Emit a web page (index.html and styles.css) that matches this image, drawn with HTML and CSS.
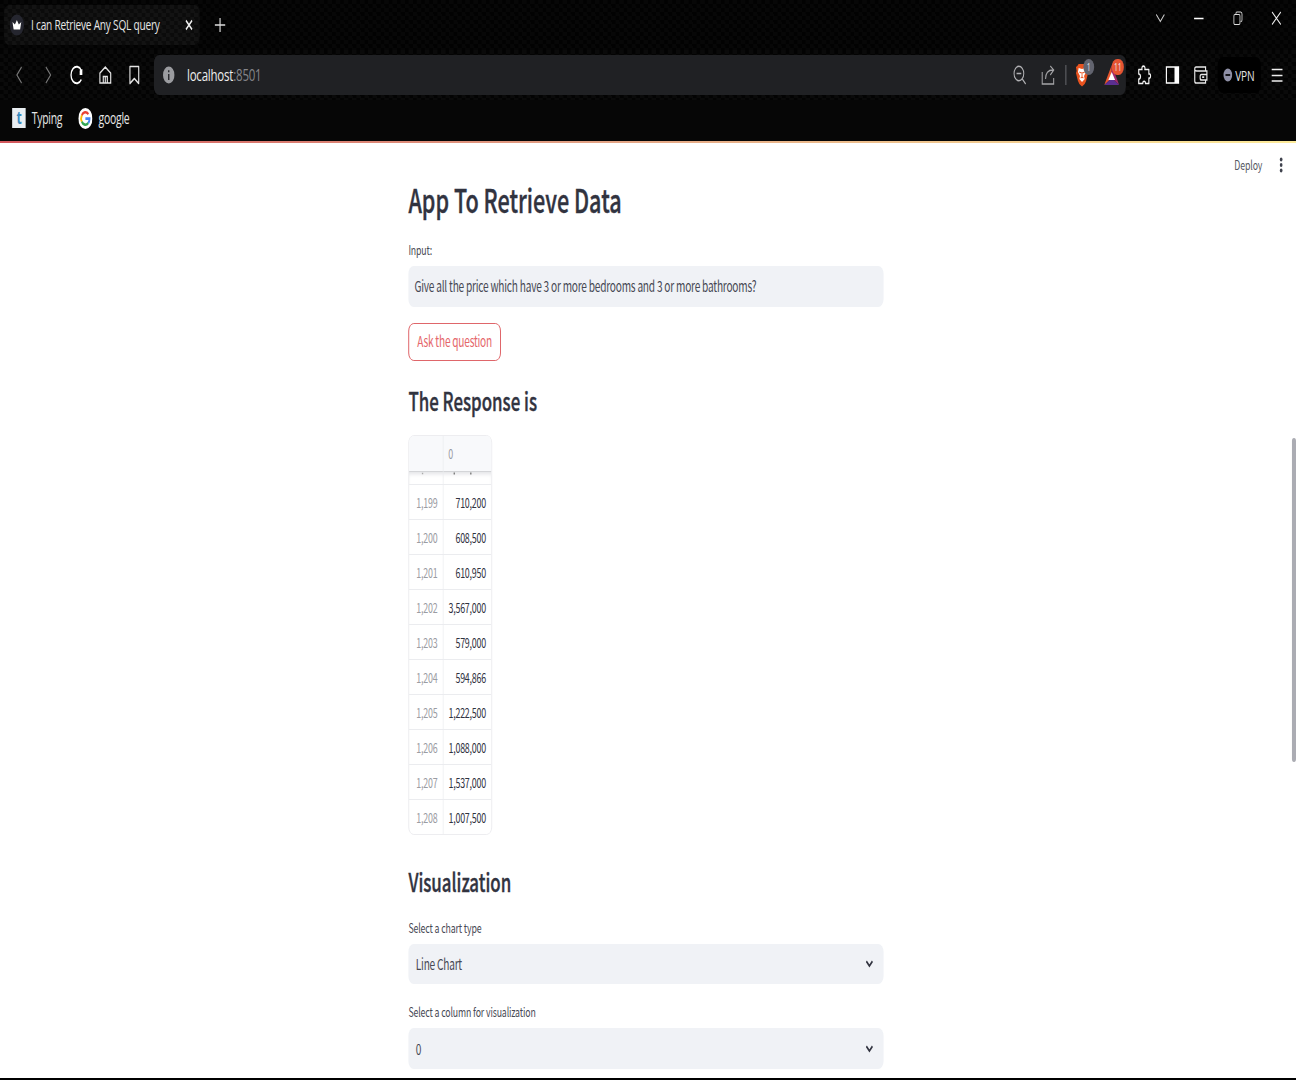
FILE: index.html
```
<!DOCTYPE html>
<html lang="en">
<head>
<meta charset="utf-8">
<title>I can Retrieve Any SQL query</title>
<link rel="stylesheet" href="styles.css">
</head>
<body>
<div class="viewport">
<div class="screen">
  <header class="browser">
    <div class="tabstrip">
      <div class="tab">
        <svg class="favicon" width="22" height="22" viewBox="0 0 22 22"><circle cx="11" cy="11" r="10.5" fill="#25262f"/><path d="M4.500 8l3.600 2.500L11 6l2.900 4.500L17.500 8l-1.700 7.500H6.200z" fill="#fff"/></svg>
        <span class="tab-title">I can Retrieve Any SQL query</span>
        <svg class="tab-close" width="12" height="12" viewBox="0 0 12 12"><path d="M1.500 1.500l9 9M10.500 1.500l-9 9" stroke="#f0f0f0" stroke-width="1.800"/></svg>
      </div>
      <svg class="new-tab" width="16" height="16" viewBox="0 0 16 16"><path d="M8 1v14M0 8h16" stroke="#ddd" stroke-width="1.700"/></svg>
      <div class="window-controls">
        <svg width="16" height="16" viewBox="0 0 16 16"><path d="M2 4.500l6 7 6-7" fill="none" stroke="#ccc" stroke-width="1.200"/></svg>
        <svg width="16" height="16" viewBox="0 0 16 16"><path d="M1 8.500h14" stroke="#fff" stroke-width="1.300"/></svg>
        <svg width="16" height="16" viewBox="0 0 16 16"><rect x="2" y="4.500" width="9" height="10" rx="1.500" fill="none" stroke="#ddd" stroke-width="1.200"/><path d="M5 4V3.500Q5 2 6.500 2H12q2 0 2 2v6q0 1.500-1.500 1.500H12" fill="none" stroke="#ddd" stroke-width="1.200"/></svg>
        <svg width="16" height="16" viewBox="0 0 16 16"><path d="M1.500 2l13 12.500M14.500 2l-13 12.500" stroke="#eee" stroke-width="1.300"/></svg>
      </div>
    </div>
    <div class="toolbar">
      <div class="nav">
        <svg width="22" height="22" viewBox="0 0 22 22"><path d="M15 3L8 11l7 8" fill="none" stroke="#777" stroke-width="1.500"/></svg>
        <svg width="22" height="22" viewBox="0 0 22 22"><path d="M8 3l7 8-7 8" fill="none" stroke="#777" stroke-width="1.500"/></svg>
        <svg width="22" height="22" viewBox="0 0 22 22"><path d="M18.500 15.500A8.300 8.300 0 1 1 18.500 6.500" fill="none" stroke="#fff" stroke-width="1.900"/><path d="M16 6.500l4-1.500v6h-4z" fill="#fff"/></svg>
        <svg width="22" height="22" viewBox="0 0 22 22"><path d="M3 9.200L11 3l8 6.200V19H3zM8 19v-6.500h6V19M11 13v6" fill="none" stroke="#e4e4e4" stroke-width="1.700"/></svg>
        <svg width="22" height="22" viewBox="0 0 22 22"><path d="M4.500 2.500h13v17L11 14.500l-6.500 5z" fill="none" stroke="#e4e4e4" stroke-width="1.700" stroke-linejoin="round"/></svg>
      </div>
      <div class="address">
        <svg class="info" width="18" height="18" viewBox="0 0 18 18"><circle cx="9" cy="9" r="8.500" fill="#9b9ca0"/><path d="M9 8v6M9 4.200v2" stroke="#222327" stroke-width="2"/></svg>
        <span class="url">localhost<span class="port">:8501</span></span>
        <div class="address-actions">
          <svg width="22" height="22" viewBox="0 0 22 22"><circle cx="9.500" cy="9.500" r="7.200" fill="none" stroke="#b0b0b3" stroke-width="1.500"/><path d="M14.500 15l5 5M6 9.500h7" stroke="#b0b0b3" stroke-width="1.700"/></svg>
          <svg width="22" height="22" viewBox="0 0 22 22"><path d="M2 8v12h17v-6M7 15c0-6 4-9 11-9M14 2l5 4-5 5" fill="none" stroke="#a5a5a8" stroke-width="1.500"/></svg>
          <i class="divider"></i>
          <span class="ext">
            <svg width="20" height="24" viewBox="0 0 20 24"><path d="M5 1h10l2 2 2 1-1 4 1 2-3 8q-1 3-6 5.500Q5 21 4 18L1 10l1-2-1-4 2-1z" fill="#e9531f"/><path d="M5 5l5 1 5-1 1 4-3 4 1 3-4 3-4-3 1-3-3-4z" fill="#fff"/><path d="M6 9l3 1M14 9l-3 1M10 9v5l-2 1M10 14l2 1" stroke="#e9531f" stroke-width="1.200" fill="none"/></svg>
            <b class="badge">1</b>
          </span>
          <span class="ext">
            <svg width="24" height="22" viewBox="0 0 24 22"><path d="M12 1L1 21l11-7z" fill="#e8562d"/><path d="M12 1l11 20-11-7z" fill="#a12a70"/><path d="M1 21h22l-11-7z" fill="#5b2f91"/><path d="M12 8l5 8H7z" fill="#fff"/></svg>
            <b class="badge badge-red">11</b>
          </span>
        </div>
      </div>
      <div class="extensions">
        <svg width="22" height="22" viewBox="0 0 22 22"><path d="M3 5.500h5C6 1 14 1 12 5.500h6V10c3.500-1 3.500 5 0 4v5.500h-5c0-3-4-3-4 0H3V15c3.500 0 3.500-5 0-5z" fill="none" stroke="#f2f2f2" stroke-width="1.700" stroke-linejoin="round"/></svg>
        <svg width="22" height="22" viewBox="0 0 22 22"><path d="M2 3h18v16H2z" fill="none" stroke="#fff" stroke-width="1.700"/><path d="M14 3h6v16h-6z" fill="#fff"/></svg>
        <svg width="22" height="22" viewBox="0 0 22 22"><path d="M18 7V3H4Q2 3 2 5v12q0 2 2 2h14v-3M2 6q1 1 3 1h15v9h-8q-2 0-2-2v-1.500q0-2 2-2h8M13 13.200h3" fill="none" stroke="#e8e8e8" stroke-width="1.700"/></svg>
      </div>
      <div class="vpn">
        <svg width="14" height="14" viewBox="0 0 14 14"><circle cx="7" cy="7" r="6.500" fill="#8f90a6"/><path d="M3.500 7h7" stroke="#17171c" stroke-width="2"/></svg>
        <span>VPN</span>
      </div>
      <svg class="menu" width="20" height="16" viewBox="0 0 20 16"><path d="M2 2.500h16M2 8.500h16M2 14h16" stroke="#eee" stroke-width="1.600"/></svg>
    </div>
    <div class="bookmarks">
      <span class="mark-t">t</span><span class="mark-name typing">Typing</span>
      <svg width="21" height="21" viewBox="0 0 21 21"><circle cx="10.500" cy="10.500" r="10.500" fill="#fff"/><g fill="none" stroke-width="2.700"><path d="M5.200 7.200A6.200 6.200 0 0 1 15 6.200" stroke="#e94335"/><path d="M5.200 13.800a6.200 6.200 0 0 1 0-6.600" stroke="#fabb05"/><path d="M14.800 15a6.200 6.200 0 0 1-9.600-1.200" stroke="#34a853"/><path d="M10.500 10.700h6.200a6.200 6.200 0 0 1-1.900 4.300" stroke="#4285f4"/></g></svg>
      <span class="mark-name">google</span>
    </div>
  </header>

  <main class="app">
    <div class="decoration"></div>
    <div class="app-menu">
      <span>Deploy</span>
      <svg width="6" height="16" viewBox="0 0 6 16"><g fill="#40434e"><circle cx="3" cy="2.500" r="2"/><circle cx="3" cy="8" r="2"/><circle cx="3" cy="13.500" r="2"/></g></svg>
    </div>
    <div class="content">
      <h1>App To Retrieve Data</h1>
      <label class="label label-input">Input:</label>
      <div class="field input">Give all the price which have 3 or more bedrooms and 3 or more bathrooms?</div>
      <button class="ask">Ask the question</button>
      <h2>The Response is</h2>
      <div class="frame">
        <div class="row head"><span></span><span>0</span></div>
        <div class="row partial"><span></span><span></span>
          <svg width="122" height="4" viewBox="0 0 122 4"><path d="M19 1.500h2" stroke="#aaa" stroke-width="1.500"/><path d="M66 1.500h2M90.500 1.500h2" stroke="#777" stroke-width="2"/></svg>
        </div>
        <div class="row"><span>1,199</span><span>710,200</span></div>
        <div class="row"><span>1,200</span><span>608,500</span></div>
        <div class="row"><span>1,201</span><span>610,950</span></div>
        <div class="row"><span>1,202</span><span>3,567,000</span></div>
        <div class="row"><span>1,203</span><span>579,000</span></div>
        <div class="row"><span>1,204</span><span>594,866</span></div>
        <div class="row"><span>1,205</span><span>1,222,500</span></div>
        <div class="row"><span>1,206</span><span>1,088,000</span></div>
        <div class="row"><span>1,207</span><span>1,537,000</span></div>
        <div class="row"><span>1,208</span><span>1,007,500</span></div>
      </div>
      <h2 class="visual">Visualization</h2>
      <label class="label">Select a chart type</label>
      <div class="field select"><span>Line Chart</span><svg width="12" height="8" viewBox="0 0 12 8"><path d="M1.500 1.200L6 6l4.500-4.800" fill="none" stroke="#31333f" stroke-width="2.200"/></svg></div>
      <label class="label label-column">Select a column for visualization</label>
      <div class="field select last"><span>0</span><svg width="12" height="8" viewBox="0 0 12 8"><path d="M1.500 1.200L6 6l4.500-4.800" fill="none" stroke="#31333f" stroke-width="2.200"/></svg></div>
    </div>
    <div class="scrollbar"></div>
  </main>
</div>
</div>
</body>
</html>
```
FILE: styles.css
```
* { box-sizing: border-box; }

body { margin: 0; background: #000; }

.viewport {
  width: 1296px;
  height: 1080px;
  overflow: hidden;
}

/* A 1920px wide desktop shown at 67.5% of its width */
.screen {
  width: 1920px;
  height: 1080px;
  transform: scaleX(.675);
  transform-origin: 0 0;
  display: flex;
  flex-direction: column;
  font-family: "Noto Sans CJK SC", "Open Sans", sans-serif;
}

svg { display: block; flex: none; }

.browser {
  height: 141px;
  background-color: #060606;
  font-family: "Open Sans", "Noto Sans", sans-serif;
  color: #e6e6e6;
}

.tabstrip {
  height: 50px;
  display: flex;
  background: repeating-conic-gradient(#070707 0 25%, #020202 0 50%) 0 0 / 12px 8px;
}

.tab {
  width: 290px;
  height: 40px;
  margin: 5px 0 0 6px;
  padding: 0 10px 0 8px;
  display: flex;
  align-items: center;
  border-radius: 8px;
  background: repeating-conic-gradient(#131313 0 25%, #0b0b0b 0 50%) 0 0 / 12px 8px;
}

.tab-title {
  margin-left: 10px;
  padding-bottom: 2px;
  width: 228px;
  font-size: 15px;
  letter-spacing: -.340px;
  white-space: nowrap;
}

.new-tab { margin: 17px 0 0 22px; }

.window-controls {
  margin: 10px 21px 0 auto;
  height: 16px;
  display: flex;
  gap: 41.300px;
}

.toolbar {
  height: 50px;
  display: flex;
  align-items: center;
  background: repeating-conic-gradient(#0a0a0a 0 25%, #030303 0 50%) 0 0 / 12px 8px;
}

.nav { display: flex; gap: 20.700px; padding-left: 17px; width: 228px; }

.address {
  width: 1440px;
  height: 40px;
  padding-left: 13px;
  display: flex;
  align-items: center;
  border-radius: 8px;
  background: #202124;
}

.url { margin-left: 18px; padding-bottom: 1px; font-size: 17px; letter-spacing: -.300px; color: #eee; }
.port { color: #85868a; }

.address-actions {
  margin: 0 9px 0 auto;
  display: flex;
  align-items: center;
}
.address-actions > svg { margin-right: 20px; }
.address-actions > svg + svg { margin-right: 14px; }
.divider { width: 2px; height: 20px; margin-right: 13px; background: #55565a; }

.ext { position: relative; margin-right: 22px; }
.ext + .ext { margin-right: 0; }

.badge {
  position: absolute;
  top: -4px;
  right: -8px;
  width: 16px;
  height: 16px;
  border-radius: 8px;
  background: #62646f;
  color: #e8e8e8;
  font-size: 10px;
  font-weight: 400;
  line-height: 16px;
  text-align: center;
}
.badge-red { top: -5px; right: -6px; width: 18px; background: #e65432; }

.extensions { display: flex; gap: 20px; margin-left: 16px; }

.vpn {
  width: 64px;
  height: 36px;
  margin-left: 14px;
  padding-left: 8px;
  display: flex;
  align-items: center;
  gap: 4px;
  border-radius: 8px;
  background: #000;
  font-size: 15px;
  letter-spacing: -.300px;
}
.vpn span { padding-bottom: 1px; }

.menu { margin-left: 14px; }

.bookmarks {
  height: 41px;
  padding: 0 0 5px 18px;
  display: flex;
  align-items: center;
  font-size: 15.500px;
  letter-spacing: -.400px;
}

.mark-t {
  width: 20px;
  height: 20px;
  background: #e9eef2;
  color: #3b8cc0;
  font-size: 18px;
  font-weight: 700;
  line-height: 19px;
  text-align: center;
}
.mark-name { margin-left: 9px; padding-bottom: 1px; }
.typing { width: 69px; }

.app {
  position: relative;
  height: 937px;
  background: #fff;
  color: #31333f;
}

.decoration { height: 2px; background: linear-gradient(90deg, #d2575c, #e2a184 45%, #fdeb9a); }

.app-menu {
  position: absolute;
  top: 14px;
  right: 19px;
  height: 20px;
  display: flex;
  align-items: center;
  gap: 25px;
  font-size: 13px;
  letter-spacing: -.200px;
  color: #555762;
}
.app-menu span { padding-bottom: 2px; }

.content {
  width: 704px;
  margin-left: 605px;
  display: flex;
  flex-direction: column;
}

h1, h2 { font-weight: 500; -webkit-text-stroke: .4px #31333f; }
h1 { margin: 36px 0 0; font-size: 32px; line-height: 40px; }
h2 { margin: 24px 0 0; font-size: 25px; line-height: 30px; }

.label { font-size: 13px; letter-spacing: -.200px; line-height: 20px; white-space: nowrap; color: #474954; }
.label-input { margin-top: 21px; }

.field {
  height: 40px;
  border-radius: 8px;
  background: #f0f2f6;
  font-size: 15px;
  letter-spacing: -.330px;
  line-height: 40px;
  white-space: nowrap;
  color: #474954;
}

.input { height: 41px; margin-top: 6px; padding-left: 9px; }

.ask {
  width: 137px;
  height: 38px;
  margin-top: 16px;
  padding: 0 0 2px;
  border: 1px solid #d9484d;
  border-radius: 8px;
  background: #fff;
  color: #e5676b;
  font: 15px/34px "Noto Sans CJK SC", sans-serif;
  letter-spacing: -.330px;
}

.frame {
  width: 124px;
  height: 400px;
  margin-top: 20px;
  border: 1px solid #e9eaed;
  border-radius: 8px;
  overflow: hidden;
}

.row {
  height: 35px;
  display: grid;
  grid-template-columns: 51px 1fr;
  border-bottom: 1px solid #ebecef;
  font-size: 13.200px;
  letter-spacing: -.330px;
  line-height: 35px;
  text-align: right;
}
.row:last-child { border-bottom: 0; }
.row span:first-child { padding-right: 8px; border-right: 1px solid #ebecef; color: #9b9ca3; }
.row span:nth-child(2) { padding-right: 8px; }

.row.head { height: 36px; background: #f8f9fb; border-bottom-color: #d4d5d8; line-height: 36px; }
.row.head span:nth-child(2) { padding-left: 7px; text-align: left; color: #9b9ca3; }

.row.partial {
  position: relative;
  height: 13px;
  box-shadow: inset 0 5px 5px -3px #e2e3e6;
}
.partial svg { position: absolute; top: 0; left: 0; }

.visual { margin-top: 31px; }
.visual + .label { margin-top: 22px; }

.select {
  margin-top: 6px;
  padding: 0 15px 0 11px;
  display: flex;
  align-items: center;
  justify-content: space-between;
}
.label-column { margin-top: 18px; }
.last { height: 41px; }

.scrollbar {
  position: absolute;
  top: 297px;
  right: 0;
  width: 6px;
  height: 324px;
  border-radius: 3px;
  background: #abacb3;
}
```
